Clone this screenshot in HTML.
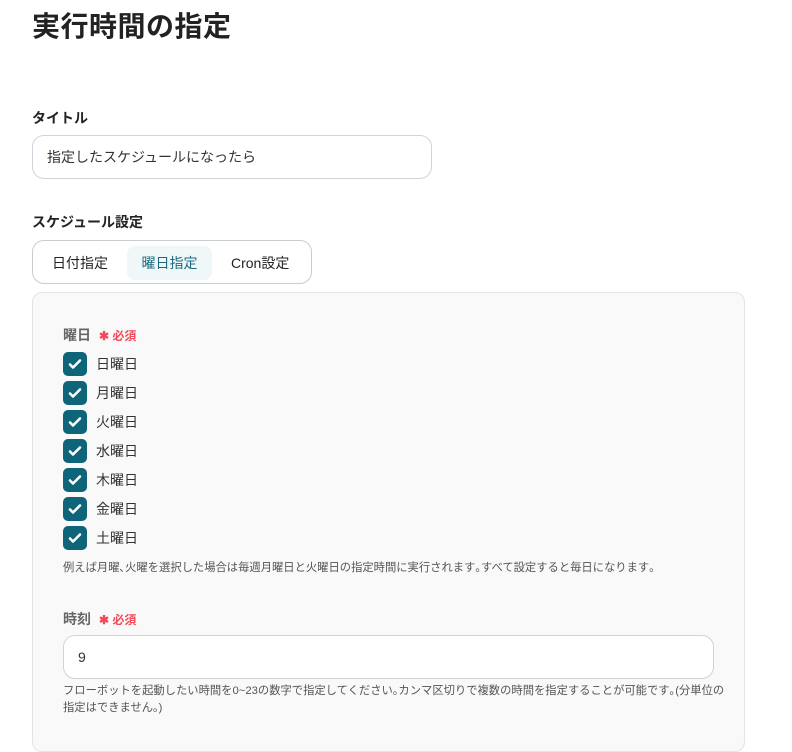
<!DOCTYPE html>
<html><head><meta charset="utf-8"><style>
*{box-sizing:border-box;margin:0;padding:0}
body{width:792px;height:723px;overflow:hidden;background:#fff;font-family:"Liberation Sans","Noto Sans CJK JP",sans-serif;color:#222;position:relative}
.a{position:absolute;white-space:nowrap}
h1{position:absolute;left:32px;top:5px;font-size:28px;font-weight:700;color:#222;letter-spacing:0.5px}
.lbl{font-size:14px;font-weight:700;color:#222}
.inp{position:absolute;border:1px solid #cfd3da;border-radius:12px;background:#fff;font-size:14px;color:#333;padding-left:14px;display:flex;align-items:center}
.tabs{position:absolute;left:32px;top:240px;width:280px;height:44px;border:1px solid #c9ccd1;border-radius:12px}
.tab{position:absolute;top:5px;height:34px;line-height:34px;font-size:14px;color:#222}
.panel{position:absolute;left:32px;top:292px;width:713px;height:460px;background:#f9f9f9;border:1px solid #e3e4e6;border-radius:10px}
.req{color:#f04a5a;font-size:12px;font-weight:700;margin-left:8px}
.cb{position:absolute;left:63px;width:24px;height:24px;background:#0e6478;border-radius:5px}
.cb svg{position:absolute;left:4px;top:4px}
.cl{position:absolute;left:96px;font-size:14px;color:#333}
.hint{font-size:11.3px;color:#555}
</style></head><body>
<h1>実行時間の指定</h1>
<div class="a lbl" style="left:32px;top:108px">タイトル</div>
<div class="inp" style="left:32px;top:135px;width:400px;height:44px">指定したスケジュールになったら</div>
<div class="a lbl" style="left:32px;top:212px">スケジュール設定</div>
<div class="tabs">
<div class="tab" style="left:19px">日付指定</div>
<div class="tab" style="left:94px;width:85px;background:#eff7f8;border-radius:8px;color:#1c6b7f;text-align:center">曜日指定</div>
<div class="tab" style="left:198px">Cron設定</div>
</div>
<div class="panel"></div>
<div class="a" style="left:63px;top:325px;font-size:14px;font-weight:700;color:#666">曜日<span class="req">✱ 必須</span></div>
<div class="cb" style="top:352px"><svg width="16" height="16" viewBox="0 0 16 16"><path d="M3 8.5l3 3 7-7" stroke="#fff" stroke-width="2.6" fill="none" stroke-linecap="round" stroke-linejoin="round"/></svg></div><div class="cl" style="top:354px">日曜日</div>
<div class="cb" style="top:381px"><svg width="16" height="16" viewBox="0 0 16 16"><path d="M3 8.5l3 3 7-7" stroke="#fff" stroke-width="2.6" fill="none" stroke-linecap="round" stroke-linejoin="round"/></svg></div><div class="cl" style="top:383px">月曜日</div>
<div class="cb" style="top:410px"><svg width="16" height="16" viewBox="0 0 16 16"><path d="M3 8.5l3 3 7-7" stroke="#fff" stroke-width="2.6" fill="none" stroke-linecap="round" stroke-linejoin="round"/></svg></div><div class="cl" style="top:412px">火曜日</div>
<div class="cb" style="top:439px"><svg width="16" height="16" viewBox="0 0 16 16"><path d="M3 8.5l3 3 7-7" stroke="#fff" stroke-width="2.6" fill="none" stroke-linecap="round" stroke-linejoin="round"/></svg></div><div class="cl" style="top:441px">水曜日</div>
<div class="cb" style="top:468px"><svg width="16" height="16" viewBox="0 0 16 16"><path d="M3 8.5l3 3 7-7" stroke="#fff" stroke-width="2.6" fill="none" stroke-linecap="round" stroke-linejoin="round"/></svg></div><div class="cl" style="top:470px">木曜日</div>
<div class="cb" style="top:497px"><svg width="16" height="16" viewBox="0 0 16 16"><path d="M3 8.5l3 3 7-7" stroke="#fff" stroke-width="2.6" fill="none" stroke-linecap="round" stroke-linejoin="round"/></svg></div><div class="cl" style="top:499px">金曜日</div>
<div class="cb" style="top:526px"><svg width="16" height="16" viewBox="0 0 16 16"><path d="M3 8.5l3 3 7-7" stroke="#fff" stroke-width="2.6" fill="none" stroke-linecap="round" stroke-linejoin="round"/></svg></div><div class="cl" style="top:528px">土曜日</div>
<div class="a hint" style="left:63px;top:559px">例えば月曜､火曜を選択した場合は毎週月曜日と火曜日の指定時間に実行されます｡すべて設定すると毎日になります｡</div>
<div class="a" style="left:63px;top:609px;font-size:14px;font-weight:700;color:#666">時刻<span class="req">✱ 必須</span></div>
<div class="inp" style="left:63px;top:635px;width:651px;height:44px;padding-left:14px">9</div>
<div class="a hint" style="left:63px;top:683px;line-height:17px;white-space:normal;width:680px">フローボットを起動したい時間を0~23の数字で指定してください｡カンマ区切りで複数の時間を指定することが可能です｡(分単位の<br>指定はできません｡)</div>
</body></html>
